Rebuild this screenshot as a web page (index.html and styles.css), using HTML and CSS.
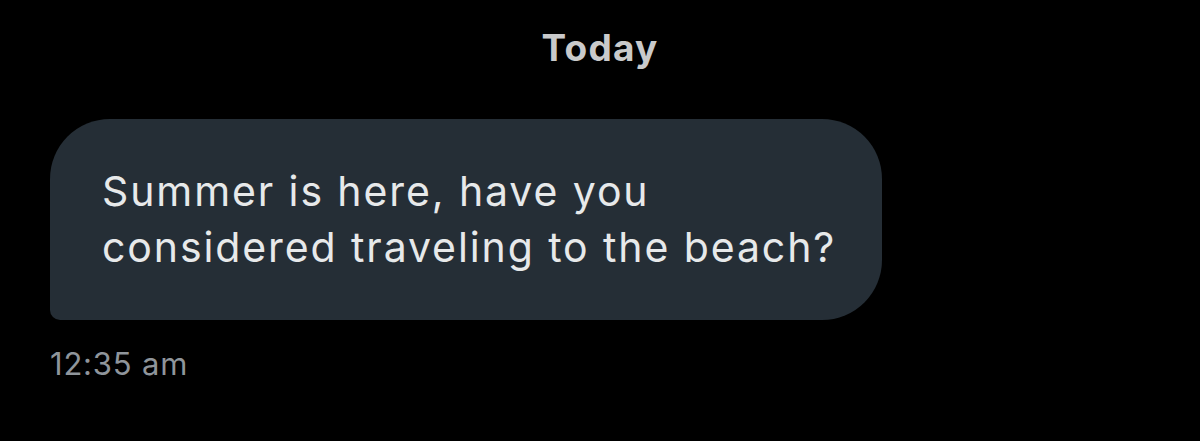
FILE: index.html
```html
<!DOCTYPE html>
<html lang="en">
<head>
  <meta charset="UTF-8">
  <meta name="viewport" content="width=device-width, initial-scale=1.0">
  <title>Messages</title>
  <link rel="stylesheet" href="styles.css">
</head>
<body>
  <div class="thread">
    <div class="day-divider">Today</div>

    <div class="message incoming">
      <div class="bubble">Summer is here, have you considered traveling to the beach?</div>
      <div class="timestamp">12:35 am</div>
    </div>
  </div>
</body>
</html>
```

FILE: styles.css
```css
body {
  margin: 0;
  background-color: #000;
  font-family: 'Inter', 'Noto Sans', sans-serif;
  height: 100vh;
  overflow: hidden;
}

.thread {
  display: flex;
  flex-direction: column;
  padding: 26px 50px 0 50px;
}

.day-divider {
  text-align: center;
  color: #c9cacb;
  font-weight: 700;
  font-size: 37px;
  line-height: 44px;
  letter-spacing: 1.2px;
  margin-bottom: 49px;
}

.message {
  display: flex;
  flex-direction: column;
  align-items: flex-start;
}

.bubble {
  box-sizing: border-box;
  width: 832px;
  padding: 44px 36px 45px 52px;
  background-color: #252e36;
  color: #e7e9ea;
  font-size: 41px;
  line-height: 56px;
  letter-spacing: 1.9px;
  border-radius: 60px 60px 60px 10px;
}

.timestamp {
  margin-top: 24px;
  color: #8f959b;
  font-size: 31px;
  line-height: 40px;
  letter-spacing: 0.8px;
}
```
